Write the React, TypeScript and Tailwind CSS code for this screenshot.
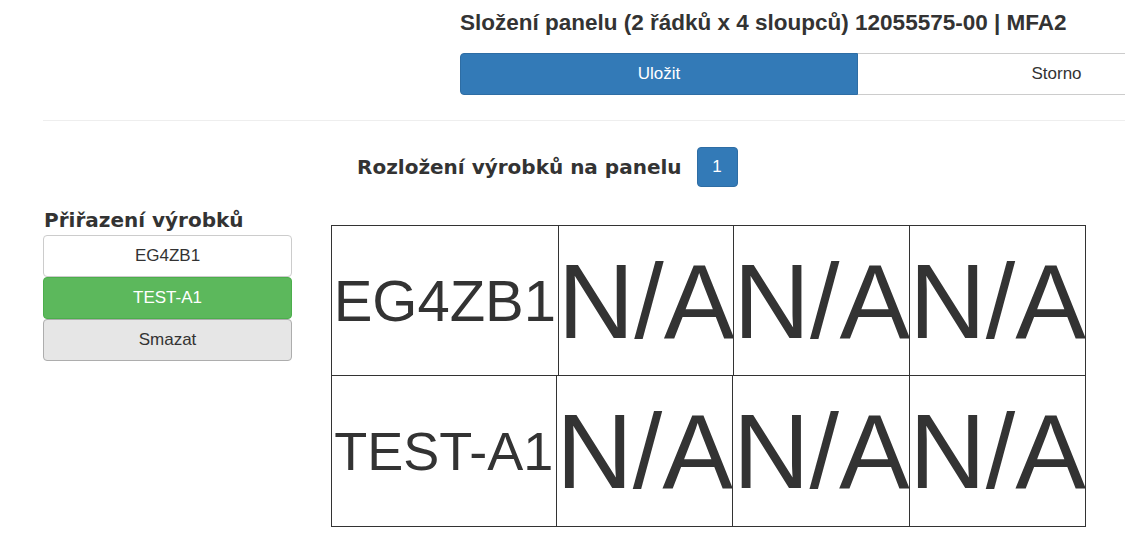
import React from "react";

const sans = "font-['Liberation_Sans',Arial,sans-serif]";
const heading = "font-['DejaVu_Sans',Verdana,sans-serif] font-bold text-[20px] leading-[24px] text-[#333]";

const rows = [
  [
    { text: "EG4ZB1", cls: "w-[226px] text-[58px]" },
    { text: "N/A", cls: "w-[176px] text-[106px]" },
    { text: "N/A", cls: "w-[176px] text-[106px]" },
    { text: "N/A", cls: "w-[176px] text-[106px]" },
  ],
  [
    { text: "TEST-A1", cls: "w-[224px] text-[54px]" },
    { text: "N/A", cls: "w-[177px] text-[106px]" },
    { text: "N/A", cls: "w-[177px] text-[106px]" },
    { text: "N/A", cls: "w-[176px] text-[106px]" },
  ],
];

const PanelGrid = () => (
  <div className="flex flex-col border border-[#333] w-[755px]">
    {rows.map((row, ri) => (
      <div
        key={ri}
        className={ri === 0 ? "flex h-[150px] border-b border-[#333]" : "flex h-[150px]"}
      >
        {row.map((cell, ci) => (
          <div
            key={ci}
            className={
              (ci > 0 ? "border-l border-[#333] " : "") +
              "flex items-center justify-center overflow-hidden leading-none whitespace-nowrap text-[#333] " +
              cell.cls
            }
          >
            {cell.text}
          </div>
        ))}
      </div>
    ))}
  </div>
);

export default function App() {
  return (
    <div className={`w-[1125px] h-[545px] overflow-hidden bg-white text-[#333] ${sans}`}>
      <div className="pl-[460px] pt-[10px]">
        <h3 className="text-[22.5px] leading-[26px] font-bold whitespace-nowrap">
          Složení panelu (2 řádků x 4 sloupců) 12055575-00 | MFA2
        </h3>
        <div className="flex w-[796px] mt-[17px]">
          <button className="w-[398px] h-[42px] bg-[#337ab7] border border-[#2e6da4] rounded-l-[4px] text-white text-[17px]">
            Uložit
          </button>
          <button className="w-[398px] h-[42px] bg-white border border-[#ccc] border-l-0 text-[#333] text-[17px]">
            Storno
          </button>
        </div>
      </div>

      <div className="ml-[43px] mt-[25px] border-t border-[#eee]" />

      <div className="flex items-center pl-[357px] mt-[26px]">
        <h4 className={heading}>Rozložení výrobků na panelu</h4>
        <span className="ml-[15px] w-[41px] h-[40px] flex items-center justify-center bg-[#337ab7] border border-[#2e6da4] rounded-[4px] text-white text-[17px]">
          1
        </span>
      </div>

      <div className="flex pl-[43px] mt-[21px]">
        <div className="w-[249px] flex flex-col">
          <h4 className={`${heading} pl-[1px] h-[27px]`}>Přiřazení výrobků</h4>
          <button className="h-[42px] bg-white border border-[#ccc] rounded-[4px] text-[#333] text-[17px]">
            EG4ZB1
          </button>
          <button className="h-[42px] bg-[#5cb85c] border border-[#4cae4c] rounded-[4px] text-white text-[17px]">
            TEST-A1
          </button>
          <button className="h-[42px] bg-[#e6e6e6] border border-[#adadad] rounded-[4px] text-[#333] text-[17px]">
            Smazat
          </button>
        </div>
        <div className="ml-[39px] mt-[17px]">
          <PanelGrid />
        </div>
      </div>
    </div>
  );
}
